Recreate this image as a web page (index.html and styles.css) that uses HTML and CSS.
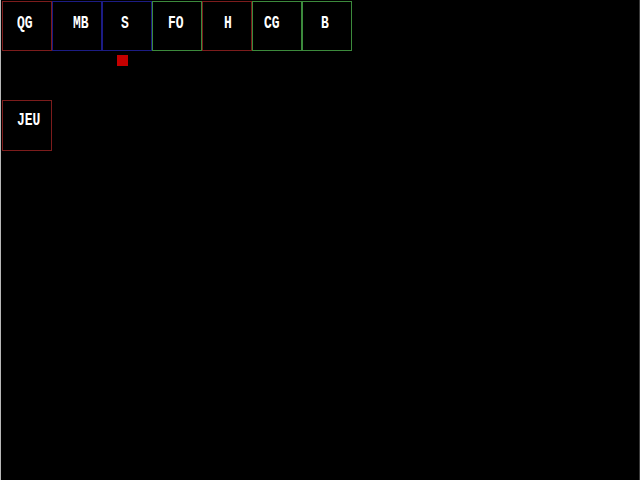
FILE: index.html
```html
<!DOCTYPE html>
<html>
<head>
<meta charset="utf-8">
<link rel="stylesheet" href="styles.css">
</head>
<body>
<div class="screen">
  <div class="row">
    <div class="box red qg"><span class="lbl">QG</span></div>
    <div class="box blue mb"><span class="lbl">MB</span></div>
    <div class="box blue s"><span class="lbl">S</span></div>
    <div class="box green fo"><span class="lbl">FO</span></div>
    <div class="box red h"><span class="lbl">H</span></div>
    <div class="box green cg"><span class="lbl">CG</span></div>
    <div class="box green b"><span class="lbl">B</span></div>
  </div>
  <div class="marker"></div>
  <div class="row second">
    <div class="box red jeu"><span class="lbl">JEU</span></div>
  </div>
</div>
</body>
</html>
```
FILE: styles.css
```css
html, body {
  margin: 0;
  padding: 0;
  background: #000;
}
body {
  width: 640px;
  height: 480px;
  box-sizing: border-box;
  border-left: 1px solid #b8b8b8;
  border-right: 1px solid #3a3a3a;
  overflow: hidden;
}
.screen {
  padding: 1px 0 0 1px;
}
.row {
  display: flex;
}
.box {
  width: 50px;
  height: 50px;
  box-sizing: border-box;
  border: 1px solid;
  padding-top: 11px;
}
.red { border-color: #7c1c1c; }
.blue { border-color: #1c1c84; }
.green { border-color: #3c8a3c; }
.lbl {
  display: inline-block;
  font-family: "Liberation Mono", monospace;
  font-weight: bold;
  font-size: 13px;
  line-height: 15px;
  color: #fff;
  transform: scaleY(1.35);
  transform-origin: 0 50%;
}
.qg { padding-left: 14px; }
.mb { padding-left: 20px; }
.s { padding-left: 18px; }
.fo { padding-left: 15px; }
.h { padding-left: 21px; }
.cg { padding-left: 11px; }
.b { padding-left: 18px; }
.jeu { padding-left: 14px; padding-top: 9px; height: 51px; }
.marker {
  width: 11px;
  height: 11px;
  margin: 4px 0 0 115px;
  background: #c40000;
}
.second {
  margin-top: 34px;
}
```
